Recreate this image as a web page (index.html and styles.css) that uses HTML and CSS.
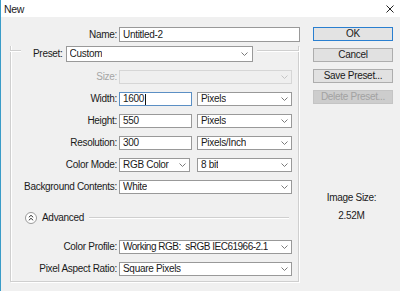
FILE: index.html
```html
<!DOCTYPE html>
<html>
<head>
<meta charset="utf-8">
<link rel="stylesheet" href="styles.css">
</head>
<body>
<div class="window">
  <div class="titlebar">
    <span class="title">New</span>
    <svg class="close" width="8" height="8" viewBox="0 0 8 8"><path d="M0.5 0.5L7.5 7.5M7.5 0.5L0.5 7.5" stroke="#222" stroke-width="1" fill="none"/></svg>
  </div>
  <div class="content">
    <div class="main">
      <div class="row name-row">
        <span class="lbl name-lbl">Name:</span>
        <div class="field input name-input">Untitled-2</div>
      </div>
      <div class="group">
        <div class="group-head">
          <span class="line line-left"></span>
          <span class="preset-lbl">Preset:</span>
          <div class="field select preset-select"><span>Custom</span><svg class="chev" width="7" height="4" viewBox="0 0 7 4"><path d="M0.5 0.5L3.5 3.5L6.5 0.5" stroke="#7a7a7a" fill="none"/></svg></div>
          <span class="line line-right"></span>
        </div>
        <div class="rows">
          <div class="row">
            <span class="lbl disabled">Size:</span>
            <div class="field select full disabled-field"><span></span><svg class="chev" width="7" height="4" viewBox="0 0 7 4"><path d="M0.5 0.5L3.5 3.5L6.5 0.5" stroke="#c4c4c4" fill="none"/></svg></div>
          </div>
          <div class="row">
            <span class="lbl">Width:</span>
            <div class="field input num focus">1600<span class="caret"></span></div>
            <div class="field select unit"><span>Pixels</span><svg class="chev" width="7" height="4" viewBox="0 0 7 4"><path d="M0.5 0.5L3.5 3.5L6.5 0.5" stroke="#7a7a7a" fill="none"/></svg></div>
          </div>
          <div class="row">
            <span class="lbl">Height:</span>
            <div class="field input num">550</div>
            <div class="field select unit"><span>Pixels</span><svg class="chev" width="7" height="4" viewBox="0 0 7 4"><path d="M0.5 0.5L3.5 3.5L6.5 0.5" stroke="#7a7a7a" fill="none"/></svg></div>
          </div>
          <div class="row">
            <span class="lbl">Resolution:</span>
            <div class="field input num">300</div>
            <div class="field select unit"><span>Pixels/Inch</span><svg class="chev" width="7" height="4" viewBox="0 0 7 4"><path d="M0.5 0.5L3.5 3.5L6.5 0.5" stroke="#7a7a7a" fill="none"/></svg></div>
          </div>
          <div class="row">
            <span class="lbl">Color Mode:</span>
            <div class="field select mode"><span>RGB Color</span><svg class="chev" width="7" height="4" viewBox="0 0 7 4"><path d="M0.5 0.5L3.5 3.5L6.5 0.5" stroke="#7a7a7a" fill="none"/></svg></div>
            <div class="field select unit bits"><span>8 bit</span><svg class="chev" width="7" height="4" viewBox="0 0 7 4"><path d="M0.5 0.5L3.5 3.5L6.5 0.5" stroke="#7a7a7a" fill="none"/></svg></div>
          </div>
          <div class="row">
            <span class="lbl">Background Contents:</span>
            <div class="field select full"><span>White</span><svg class="chev" width="7" height="4" viewBox="0 0 7 4"><path d="M0.5 0.5L3.5 3.5L6.5 0.5" stroke="#7a7a7a" fill="none"/></svg></div>
          </div>
        </div>
        <div class="advanced">
          <svg class="adv-icon" width="12" height="12" viewBox="0 0 12 12"><circle cx="6" cy="6" r="5.5" fill="#fff" stroke="#9a9a9a"/><path d="M3.8 5.3L6 3.3L8.2 5.3M3.8 8.3L6 6.3L8.2 8.3" stroke="#333" stroke-width="1" fill="none"/></svg>
          <span class="adv-text">Advanced</span>
          <span class="line adv-line"></span>
        </div>
        <div class="rows adv-rows">
          <div class="row">
            <span class="lbl">Color Profile:</span>
            <div class="field select full"><span class="tight">Working RGB:&nbsp; sRGB IEC61966-2.1</span><svg class="chev" width="7" height="4" viewBox="0 0 7 4"><path d="M0.5 0.5L3.5 3.5L6.5 0.5" stroke="#7a7a7a" fill="none"/></svg></div>
          </div>
          <div class="row">
            <span class="lbl">Pixel Aspect Ratio:</span>
            <div class="field select full"><span>Square Pixels</span><svg class="chev" width="7" height="4" viewBox="0 0 7 4"><path d="M0.5 0.5L3.5 3.5L6.5 0.5" stroke="#7a7a7a" fill="none"/></svg></div>
          </div>
        </div>
      </div>
    </div>
    <div class="side">
      <div class="btn ok">OK</div>
      <div class="btn">Cancel</div>
      <div class="btn">Save Preset...</div>
      <div class="btn btn-disabled">Delete Preset...</div>
      <div class="imgsize">
        <div class="imgsize-lbl">Image Size:</div>
        <div class="imgsize-val">2.52M</div>
      </div>
    </div>
  </div>
</div>
</body>
</html>
```

FILE: styles.css
```css
* { box-sizing: border-box; margin: 0; padding: 0; }
html, body { width: 400px; height: 291px; overflow: hidden; }
body {
  font-family: "Liberation Sans", Arial, sans-serif;
  font-size: 10px;
  letter-spacing: -0.3px;
  color: #1a1a1a;
  background: #f0f0f0;
}
.window {
  height: 291px;
  border-left: 1px solid #3a9cc8;
  display: flex;
  flex-direction: column;
}
.titlebar {
  height: 17px;
  background: #fff;
  display: flex;
  align-items: center;
  justify-content: space-between;
  padding: 0 6px 0 3px;
}
.title { font-size: 10.5px; line-height: 12px; }
.close { display: block; }
.content { flex: 1; display: flex; background: #f0f0f0; }
.main { width: 312px; padding-top: 10px; }

.row { display: flex; align-items: center; height: 14px; }
.lbl { flex: none; width: 106px; margin-right: 2px; text-align: right; white-space: nowrap; line-height: 12px; }
.lbl.disabled { color: #a5a5a5; }
.name-row { height: 15px; }
.name-lbl { width: 116px; }

.field {
  height: 14px;
  border: 1px solid #999;
  background: #fff;
  padding-left: 3px;
  line-height: 12px;
  white-space: nowrap;
  overflow: hidden;
}
.name-input { width: 181px; height: 15px; line-height: 13px; }
.select { display: flex; align-items: center; justify-content: space-between; padding-right: 3px; }
.select span { overflow: hidden; }
.select .tight { letter-spacing: -0.5px; }
.chev { display: block; flex: none; }
.full { width: 173px; }
.num { width: 73px; margin-right: 5px; }
.unit { width: 95px; }
.mode { width: 71px; margin-right: 7px; }
.focus { border-color: #5b8fc4; display: flex; align-items: center; }
.caret { display: inline-block; width: 1px; height: 11px; background: #111; margin-left: 1px; }
.disabled-field { background: #efefef; border-color: #d6d6d6; }

.group {
  margin-top: 8px;
  margin-left: 9px;
  width: 289px;
  border: 1px solid #cfcfcf;
  border-top: none;
  box-shadow: inset 1px 0 0 #fff, 1px 1px 0 #fff;
  padding-bottom: 5px;
}
.group-head { display: flex; align-items: flex-start; height: 16px; margin-top: -4px; }
.line { display: block; height: 2px; border-top: 1px solid #cfcfcf; border-bottom: 1px solid #fff; }
.line-left { width: 11px; margin-left: -1px; margin-top: 4px; flex: none; }
.preset-lbl { margin-left: 12px; line-height: 16px; flex: none; }
.preset-select { width: 187px; height: 16px; margin-left: 3px; padding-right: 4px; line-height: 14px; flex: none; }
.line-right { flex: 1; margin-left: 4px; margin-right: -1px; margin-top: 4px; }

.rows { display: flex; flex-direction: column; gap: 8px; margin-top: 8px; }
.advanced { display: flex; align-items: center; height: 16px; margin-top: 16px; }
.adv-icon { display: block; margin-left: 14px; flex: none; }
.adv-text { margin-left: 5px; line-height: 12px; }
.adv-line { flex: 1; margin-left: 5px; margin-right: 9px; }
.adv-rows { margin-top: 14px; }

.side { width: 80px; padding-top: 10px; display: flex; flex-direction: column; }
.btn {
  height: 14px;
  border: 1px solid #adadad;
  background: #e1e1e1;
  text-align: center;
  line-height: 12px;
  margin-bottom: 7px;
}
.btn.ok { border-color: #2a7fd0; background: #e3e3e3; }
.btn-disabled { background: #cdcdcd; border-color: #c4c4c4; color: #a2a2a2; }
.imgsize { margin-top: 81px; margin-right: 3px; text-align: center; }
.imgsize-lbl { line-height: 12px; }
.imgsize-val { line-height: 12px; margin-top: 6px; }
```
